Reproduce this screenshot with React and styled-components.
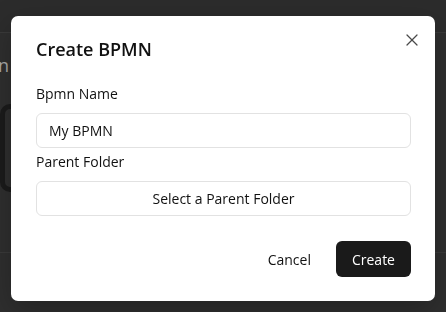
import React from 'react';
import styled, {createGlobalStyle} from 'styled-components';
import {X} from 'lucide-react';

const GlobalStyle = createGlobalStyle`
    html, body {
        margin:0;
        padding:0;
        background:#2f2f2f;
        font-family:'Open Sans','Noto Sans',sans-serif;
    }
`;

const App = ()=>{
    return (
        <>
            <GlobalStyle/>
            <Page>
                <Header/>
                <PageTitle>Design</PageTitle>
                <Canvas/>
                <Footer/>
            </Page>
            <Overlay>
                <Dialog role="dialog">
                    <CloseButton aria-label="Close"><X size={20} strokeWidth={1.5}/></CloseButton>
                    <Title>Create BPMN</Title>
                    <Field>
                        <Label>Bpmn Name</Label>
                        <Input defaultValue="My BPMN"/>
                    </Field>
                    <Field>
                        <Label>Parent Folder</Label>
                        <OutlineButton>Select a Parent Folder</OutlineButton>
                    </Field>
                    <Actions>
                        <Button variant="ghost">Cancel</Button>
                        <Button>Create</Button>
                    </Actions>
                </Dialog>
            </Overlay>
        </>
    );
}

const Page = styled.div`
    width:446px;
    height:312px;
    overflow:hidden;
    display:flex;
    flex-direction:column;
    background:#2f2f2f;
`;

const Header = styled.div`
    height:32px;
    border-bottom:1px solid #3a3a3a;
    background:#2c2c2c;
`;

const PageTitle = styled.h2`
    margin:20px 0 0 -48px;
    font-size:18px;
    font-weight:500;
    line-height:24px;
    color:#a9a9a9;
`;

const Canvas = styled.div`
    margin:27px 0 0 0;
    width:120px;
    height:78px;
    border:5px solid #1b1b1b;
    border-radius:10px;
    background:#2f2f2f;
`;

const Footer = styled.div`
    margin-top:60px;
    border-top:1px solid #3a3a3a;
`;

const Overlay = styled.div`
    position:fixed;
    inset:0;
    display:flex;
    align-items:flex-start;
    justify-content:center;
    padding-top:16px;
`;

const Dialog = styled.div`
    position:relative;
    box-sizing:border-box;
    width:424px;
    height:285px;
    background:#ffffff;
    border-radius:7px;
    padding:20px 24px 24px 25px;
    display:flex;
    flex-direction:column;
    box-shadow:0 10px 30px rgba(0,0,0,.25);
`;

const CloseButton = styled.button`
    position:absolute;
    top:13px;
    right:12px;
    width:22px;
    height:22px;
    padding:0;
    border:none;
    background:none;
    color:#4a4a4a;
    display:flex;
    align-items:center;
    justify-content:center;
    cursor:pointer;
`;

const Title = styled.h2`
    margin:0 0 21px;
    font-size:18px;
    line-height:27px;
    font-weight:600;
    color:#111;
`;

const Field = styled.div`
    display:flex;
    flex-direction:column;
    margin-bottom:4px;
`;

const Label = styled.label`
    font-size:14px;
    line-height:20px;
    font-weight:500;
    color:#111;
    margin-bottom:9px;
`;

const Input = styled.input`
    box-sizing:border-box;
    height:35px;
    width:100%;
    padding:0 12px;
    border:1px solid #e2e2e2;
    border-radius:6px;
    font-family:inherit;
    font-size:14px;
    color:#111;
    outline:none;
`;

const OutlineButton = styled.button`
    box-sizing:border-box;
    height:35px;
    width:100%;
    border:1px solid #e2e2e2;
    border-radius:6px;
    background:#fff;
    font-family:inherit;
    font-size:14px;
    font-weight:500;
    color:#111;
    cursor:pointer;
`;

const Actions = styled.div`
    margin-top:auto;
    display:flex;
    justify-content:flex-end;
    gap:9px;
`;

const Button = styled.button`
    height:36px;
    padding:0 16px;
    border:none;
    border-radius:6px;
    font-family:inherit;
    font-size:14px;
    font-weight:500;
    cursor:pointer;
    background:${p=>p.variant==='ghost' ? 'transparent' : '#1a1a1a'};
    color:${p=>p.variant==='ghost' ? '#111' : '#fff'};
`;

export default App;
